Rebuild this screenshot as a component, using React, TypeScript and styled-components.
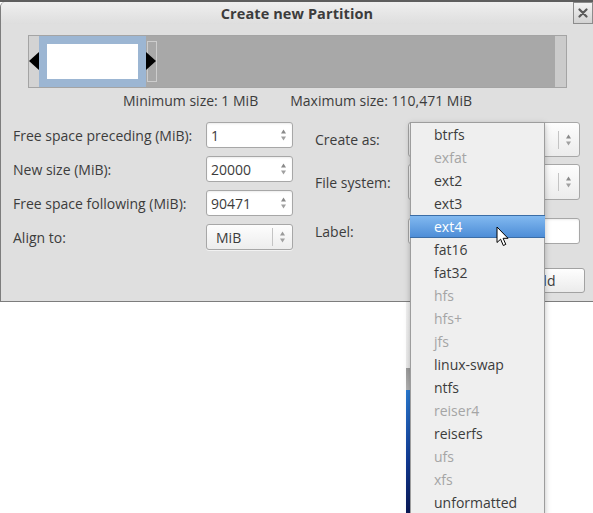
import React from 'react';
import styled, { createGlobalStyle, css } from 'styled-components';

const GlobalStyle = createGlobalStyle`
  html, body {
    margin: 0;
    padding: 0;
    background: #ffffff;
  }
  body {
    font-family: "Open Sans", "Noto Sans", "DejaVu Sans", sans-serif;
    color: #3c3c3c;
  }
`;

const Screen = styled.div`
  position: relative;
  width: 593px;
  height: 513px;
  overflow: hidden;
  background: #ffffff;
`;

const BackEdge = styled.div`
  height: 2px;
  background: #5e5e5e;
`;

const Window = styled.div`
  height: 300px;
  box-sizing: border-box;
  background: #dfdfdf;
  border-left: 1px solid #7d7d7d;
  border-bottom: 1px solid #7d7d7d;
  border-top-left-radius: 5px;
  display: flex;
  flex-direction: column;
`;

const TitleBar = styled.div`
  height: 22px;
  display: grid;
  grid-template-columns: 20px 1fr 20px;
  align-items: center;
  background: linear-gradient(#efefef, #dedede);
  border-top-left-radius: 5px;
`;

const Title = styled.div`
  grid-column: 2;
  text-align: center;
  font-size: 14.5px;
  font-weight: 700;
  letter-spacing: 0.1px;
  color: #3c3c3c;
`;

const CloseButton = styled.div`
  grid-column: 3;
  height: 22px;
  box-sizing: border-box;
  border: 1px solid #8c8c8c;
  background: linear-gradient(#f4f4f4, #d2d2d2);
  display: flex;
  align-items: center;
  justify-content: center;
`;

const Body = styled.div`
  padding: 11px 8px 0 12px;
`;

const PartitionBar = styled.div`
  margin-left: 15px;
  width: 539px;
  height: 53px;
  box-sizing: border-box;
  border: 1px solid #a4a4a4;
  display: flex;
  background: #cccccc;
`;

const Strip = styled.div<{ $w: number; $tone: string }>`
  width: ${({ $w }) => $w}px;
  background: ${({ $tone }) => $tone};
`;

const Selected = styled.div`
  position: relative;
  width: 107px;
  box-sizing: border-box;
  padding: 8px;
  background: #9cb6d3;
  display: flex;
`;

const SelectedInner = styled.div`
  flex: 1;
  background: #ffffff;
`;

const Arrow = styled.span<{ $side: 'left' | 'right' }>`
  position: absolute;
  top: 16px;
  width: 0;
  height: 0;
  border-top: 9px solid transparent;
  border-bottom: 9px solid transparent;
  ${({ $side }) =>
    $side === 'left'
      ? css`
          left: -10px;
          border-right: 10px solid #000;
        `
      : css`
          right: -10px;
          border-left: 10px solid #000;
        `}
`;

const FreeArea = styled.div`
  flex: 1;
  background: #a8a8a8;
  display: flex;
  align-items: center;
`;

const Handle = styled.div`
  width: 10px;
  height: 41px;
  box-sizing: border-box;
  margin-left: 1px;
  border: 1px solid #cdcdcd;
`;

const SizeInfo = styled.div`
  display: flex;
  justify-content: center;
  gap: 32px;
  margin-top: 5px;
  margin-right: 3px;
  height: 16px;
  line-height: 16px;
  font-size: 14px;
`;

const Form = styled.div`
  display: grid;
  grid-template-columns: 280px 1fr;
  column-gap: 22px;
  margin-top: 13px;
`;

const LeftColumn = styled.div`
  display: flex;
  flex-direction: column;
  gap: 8px;
`;

const FieldRow = styled.div`
  height: 26px;
  display: flex;
  align-items: center;
  justify-content: space-between;
`;

const Label = styled.span`
  font-size: 14px;
`;

const SpinBox = styled.div<{ $combo?: boolean }>`
  width: 87px;
  height: 26px;
  box-sizing: border-box;
  border: 1px solid #a7a7a7;
  border-radius: 3px;
  display: flex;
  align-items: center;
  padding-left: 4px;
  font-size: 14px;
  background: #ffffff;
  box-shadow: inset 0 1px 2px rgba(0, 0, 0, 0.08);
  ${({ $combo }) =>
    $combo &&
    css`
      padding-left: 9px;
      background: linear-gradient(#fdfdfd, #ededed);
      box-shadow: 0 1px 0 rgba(255, 255, 255, 0.6);
    `}
`;

const Stepper = styled.div<{ $divided?: boolean }>`
  margin-left: auto;
  width: 18px;
  height: 18px;
  display: flex;
  align-items: center;
  justify-content: center;
  box-sizing: border-box;
  ${({ $divided }) =>
    $divided &&
    css`
      width: 20px;
      border-left: 1px solid #c4c4c4;
    `}
`;

const RightColumn = styled.div`
  display: flex;
  flex-direction: column;
`;

const RightRow = styled.div<{ $h: number; $mt: number }>`
  height: ${({ $h }) => $h}px;
  margin-top: ${({ $mt }) => $mt}px;
  display: flex;
  align-items: center;
  justify-content: space-between;
`;

const Combo = styled.div`
  width: 172px;
  height: 100%;
  margin-right: 5px;
  box-sizing: border-box;
  border: 1px solid #a7a7a7;
  border-radius: 3px;
  background: linear-gradient(#fdfdfd, #ececec);
  display: flex;
  align-items: center;
  padding-right: 1px;
`;

const Entry = styled.div`
  width: 172px;
  height: 100%;
  margin-right: 5px;
  box-sizing: border-box;
  border: 1px solid #a7a7a7;
  border-radius: 3px;
  background: #ffffff;
  box-shadow: inset 0 1px 2px rgba(0, 0, 0, 0.08);
`;

const Button = styled.div`
  margin-left: auto;
  width: 85px;
  height: 100%;
  box-sizing: border-box;
  border: 1px solid #a2a2a2;
  border-radius: 3px;
  background: linear-gradient(#fefefe, #ebebeb);
  display: flex;
  align-items: center;
  justify-content: center;
  font-size: 14px;
`;

const Menu = styled.ul`
  position: absolute;
  left: 410px;
  top: 122px;
  width: 135px;
  margin: 0;
  padding: 0;
  list-style: none;
  box-sizing: border-box;
  background: #efefef;
  border: 1px solid #9d9d9d;
  box-shadow: 0 2px 6px rgba(0, 0, 0, 0.25);
`;

const MenuItem = styled.li<{ $disabled?: boolean; $active?: boolean }>`
  height: 23px;
  box-sizing: border-box;
  padding-left: 23px;
  display: flex;
  align-items: center;
  font-size: 14px;
  color: ${({ $disabled }) => ($disabled ? '#a5a5a5' : '#3c3c3c')};
  ${({ $active }) =>
    $active &&
    css`
      margin: 0 -1px;
      padding-left: 24px;
      color: #ffffff;
      background: linear-gradient(#82b9f0, #4d8dd7);
      border-top: 1px solid #3b6da6;
      border-bottom: 1px solid #3b6da6;
    `}
`;

const BehindStrip = styled.div`
  position: absolute;
  left: 406px;
  top: 302px;
  width: 4px;
  height: 211px;
  background: linear-gradient(
    to bottom,
    #f3f3f3 0,
    #ececec 66px,
    #9c9c9c 66px,
    #b4b4b4 88px,
    #2a7bd3 88px,
    #113a96 160px,
    #0a1a58 211px
  );
`;

const Pointer = styled.svg`
  position: absolute;
  left: 496px;
  top: 226px;
`;

const Triangles = ({ muted }: { muted?: boolean }) => (
  <svg width="7" height="14" viewBox="0 0 7 14">
    <path d="M3.5 1.5 L6 5.5 L1 5.5 Z" fill={muted ? '#9a9a9a' : '#8a8a8a'} />
    <path d="M3.5 12.5 L6 8.5 L1 8.5 Z" fill="#a0a0a0" />
  </svg>
);

const CloseGlyph = () => (
  <svg width="10" height="10" viewBox="0 0 10 10">
    <path d="M1.5 1.5 L8.5 8.5 M8.5 1.5 L1.5 8.5" stroke="#5a5a5a" strokeWidth="2.2" strokeLinecap="round" />
  </svg>
);

const spinFields = [
  { label: 'Free space preceding (MiB):', value: '1' },
  { label: 'New size (MiB):', value: '20000' },
  { label: 'Free space following (MiB):', value: '90471' },
];

const fileSystems: { name: string; disabled?: boolean; active?: boolean }[] = [
  { name: 'btrfs' },
  { name: 'exfat', disabled: true },
  { name: 'ext2' },
  { name: 'ext3' },
  { name: 'ext4', active: true },
  { name: 'fat16' },
  { name: 'fat32' },
  { name: 'hfs', disabled: true },
  { name: 'hfs+', disabled: true },
  { name: 'jfs', disabled: true },
  { name: 'linux-swap' },
  { name: 'ntfs' },
  { name: 'reiser4', disabled: true },
  { name: 'reiserfs' },
  { name: 'ufs', disabled: true },
  { name: 'xfs', disabled: true },
  { name: 'unformatted' },
];

const App = () => (
  <>
    <GlobalStyle />
    <Screen>
      <BackEdge />
      <Window>
        <TitleBar>
          <Title>Create new Partition</Title>
          <CloseButton>
            <CloseGlyph />
          </CloseButton>
        </TitleBar>
        <Body>
          <PartitionBar>
            <Strip $w={10} $tone="#d3d3d3" />
            <Selected>
              <Arrow $side="left" />
              <SelectedInner />
              <Arrow $side="right" />
            </Selected>
            <FreeArea>
              <Handle />
            </FreeArea>
            <Strip $w={11} $tone="#cbcbcb" />
          </PartitionBar>
          <SizeInfo>
            <span>Minimum size: 1 MiB</span>
            <span>Maximum size: 110,471 MiB</span>
          </SizeInfo>
          <Form>
            <LeftColumn>
              {spinFields.map(field => (
                <FieldRow key={field.label}>
                  <Label>{field.label}</Label>
                  <SpinBox>
                    {field.value}
                    <Stepper>
                      <Triangles />
                    </Stepper>
                  </SpinBox>
                </FieldRow>
              ))}
              <FieldRow>
                <Label>Align to:</Label>
                <SpinBox $combo>
                  MiB
                  <Stepper $divided>
                    <Triangles muted />
                  </Stepper>
                </SpinBox>
              </FieldRow>
            </LeftColumn>
            <RightColumn>
              <RightRow $h={35} $mt={0}>
                <Label>Create as:</Label>
                <Combo>
                  <Stepper $divided>
                    <Triangles />
                  </Stepper>
                </Combo>
              </RightRow>
              <RightRow $h={36} $mt={7}>
                <Label>File system:</Label>
                <Combo>
                  <Stepper $divided>
                    <Triangles />
                  </Stepper>
                </Combo>
              </RightRow>
              <RightRow $h={26} $mt={18}>
                <Label>Label:</Label>
                <Entry />
              </RightRow>
              <RightRow $h={25} $mt={24}>
                <Button>Add</Button>
              </RightRow>
            </RightColumn>
          </Form>
        </Body>
      </Window>
      <BehindStrip />
      <Menu>
        {fileSystems.map(fs => (
          <MenuItem key={fs.name} $disabled={fs.disabled} $active={fs.active}>
            {fs.name}
          </MenuItem>
        ))}
      </Menu>
      <Pointer width="14" height="21" viewBox="0 0 14 21">
        <path
          d="M1 1 L1 16.5 L4.6 13.2 L7.3 19.5 L9.8 18.4 L7.1 12.3 L12 12.3 Z"
          fill="#ffffff"
          stroke="#000000"
          strokeWidth="1"
          strokeLinejoin="round"
        />
      </Pointer>
    </Screen>
  </>
);

export default App;
